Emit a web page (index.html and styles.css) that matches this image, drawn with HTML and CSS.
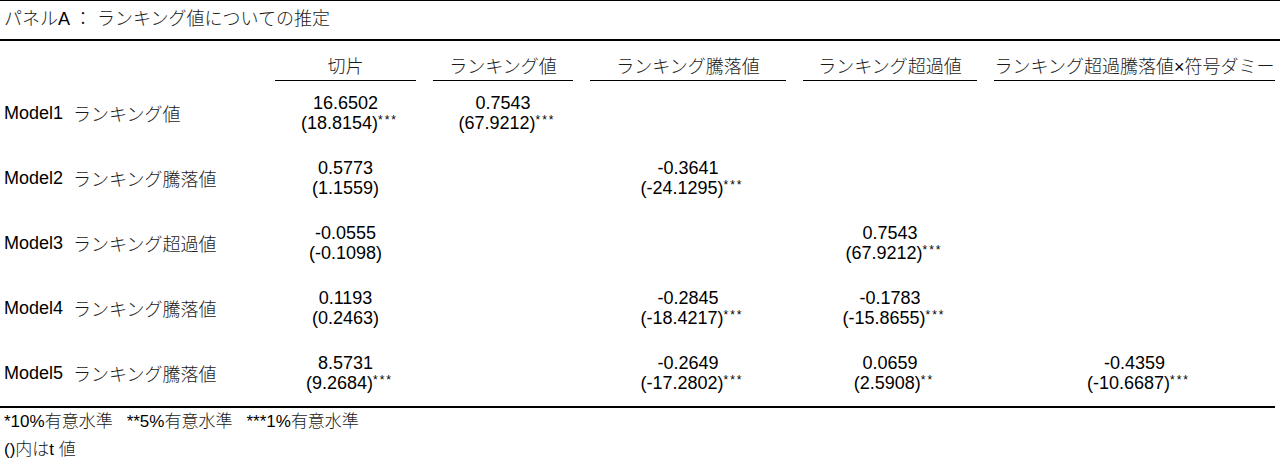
FILE: index.html
```html
<!DOCTYPE html>
<html lang="ja">
<head>
<meta charset="utf-8">
<title>パネルA</title>
<link rel="stylesheet" href="styles.css">
</head>
<body>
<div class="sheet">
  <div class="title"><span class="title-text"><span class="jp">パネル</span>A <span class="jp">：</span> <span class="jp">ランキング値についての推定</span></span></div>

  <div class="table">
    <div class="hd-blank"></div>
    <div class="hd"><span class="hd-text"><span class="jp">切片</span></span></div>
    <div class="hd"><span class="hd-text"><span class="jp">ランキング値</span></span></div>
    <div class="hd"><span class="hd-text"><span class="jp">ランキング騰落値</span></span></div>
    <div class="hd"><span class="hd-text"><span class="jp">ランキング超過値</span></span></div>
    <div class="hd"><span class="hd-text"><span class="jp">ランキング超過騰落値</span>×<span class="jp">符号ダミー</span></span></div>

    <div class="label"><span class="model">Model1</span><span class="jp">ランキング値</span></div>
    <div class="cell"><div class="ln">16.6502</div><div class="ln">(18.8154)<span class="sig">***</span></div></div>
    <div class="cell"><div class="ln">0.7543</div><div class="ln">(67.9212)<span class="sig">***</span></div></div>
    <div class="cell"></div>
    <div class="cell"></div>
    <div class="cell"></div>

    <div class="label"><span class="model">Model2</span><span class="jp">ランキング騰落値</span></div>
    <div class="cell"><div class="ln">0.5773</div><div class="ln">(1.1559)</div></div>
    <div class="cell"></div>
    <div class="cell"><div class="ln">-0.3641</div><div class="ln">(-24.1295)<span class="sig">***</span></div></div>
    <div class="cell"></div>
    <div class="cell"></div>

    <div class="label"><span class="model">Model3</span><span class="jp">ランキング超過値</span></div>
    <div class="cell"><div class="ln">-0.0555</div><div class="ln">(-0.1098)</div></div>
    <div class="cell"></div>
    <div class="cell"></div>
    <div class="cell"><div class="ln">0.7543</div><div class="ln">(67.9212)<span class="sig">***</span></div></div>
    <div class="cell"></div>

    <div class="label"><span class="model">Model4</span><span class="jp">ランキング騰落値</span></div>
    <div class="cell"><div class="ln">0.1193</div><div class="ln">(0.2463)</div></div>
    <div class="cell"></div>
    <div class="cell"><div class="ln">-0.2845</div><div class="ln">(-18.4217)<span class="sig">***</span></div></div>
    <div class="cell"><div class="ln">-0.1783</div><div class="ln">(-15.8655)<span class="sig">***</span></div></div>
    <div class="cell"></div>

    <div class="label"><span class="model">Model5</span><span class="jp">ランキング騰落値</span></div>
    <div class="cell"><div class="ln">8.5731</div><div class="ln">(9.2684)<span class="sig">***</span></div></div>
    <div class="cell"></div>
    <div class="cell"><div class="ln">-0.2649</div><div class="ln">(-17.2802)<span class="sig">***</span></div></div>
    <div class="cell"><div class="ln">0.0659</div><div class="ln">(2.5908)<span class="sig">**</span></div></div>
    <div class="cell"><div class="ln">-0.4359</div><div class="ln">(-10.6687)<span class="sig">***</span></div></div>
  </div>

  <div class="notes">
    <div class="note-line"><span class="note">*10%<span class="jp">有意水準</span></span><span class="note">**5%<span class="jp">有意水準</span></span><span class="note">***1%<span class="jp">有意水準</span></span></div>
    <div class="note-line">()<span class="jp">内は</span>t <span class="jp">値</span></div>
  </div>
</div>
</body>
</html>
```

FILE: styles.css
```css
html, body {
  margin: 0;
  padding: 0;
  background: #ffffff;
}

body {
  width: 1280px;
  height: 468px;
  overflow: hidden;
  font-family: "Liberation Sans", "Noto Sans CJK JP", sans-serif;
  font-size: 18px;
  color: #000000;
}

.sheet {
  width: 1280px;
}

.jp {
  font-family: "Noto Sans CJK JP Light", "Noto Sans CJK JP DemiLight", "Noto Sans CJK JP", sans-serif;
  font-weight: 300;
  color: #1a1a1a;
  line-height: 1;
}

.title {
  box-sizing: border-box;
  height: 41px;
  border-top: 1px solid #000;
  border-bottom: 2px solid #000;
  display: flex;
  align-items: center;
  padding-left: 4px;
  padding-bottom: 2px;
  white-space: pre;
}

.title-text {
  white-space: pre;
}

.table {
  width: 1275px;
  display: grid;
  grid-template-columns: 258px 141px 140px 196px 174px 281px;
  grid-template-rows: 40px repeat(5, 65px);
  column-gap: 17px;
  border-bottom: 2px solid #000;
}

.hd {
  box-sizing: border-box;
  height: 40px;
  padding-top: 15px;
  border-bottom: 1px solid #000;
  display: flex;
  align-items: flex-start;
  justify-content: center;
  white-space: nowrap;
}

.hd-text {
  display: block;
  height: 20px;
  line-height: 20px;
}

.label {
  display: flex;
  align-items: center;
  padding-left: 4px;
  padding-bottom: 1px;
  white-space: nowrap;
}

.model {
  margin-right: 10px;
}

.cell {
  box-sizing: border-box;
  height: 65px;
  padding-top: 12px;
  text-align: center;
  white-space: nowrap;
}

.ln {
  height: 20px;
  line-height: 20px;
}

.sig {
  font-size: 12px;
  line-height: 0;
  letter-spacing: 2px;
  vertical-align: 5px;
  margin-right: -8px;
}

.notes {
  padding-left: 4px;
  font-size: 17px;
}

.note-line {
  height: 28px;
  line-height: 28px;
  white-space: nowrap;
}

.note {
  margin-right: 14px;
}
```
